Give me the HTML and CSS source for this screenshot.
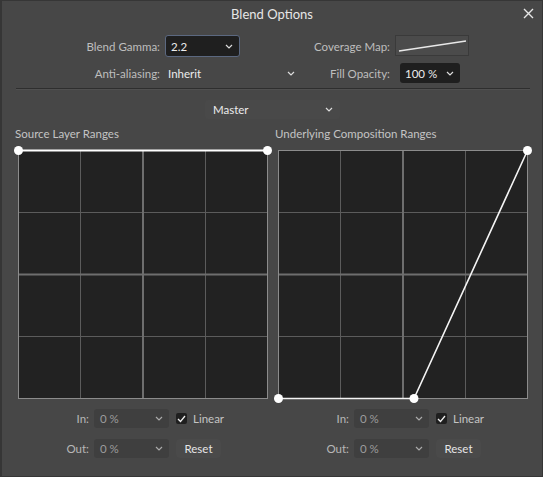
FILE: index.html
```html
<!DOCTYPE html>
<html lang="en">
<head>
    <meta charset="UTF-8">
    <title>Blend Options</title>
    <link rel="stylesheet" href="styles.css">
</head>
<body>
    <div class="window">
        <!-- Barra de título -->
        <div class="titlebar">
            <span class="title">Blend Options</span>
            <span class="close">
                <svg width="11" height="11" viewBox="0 0 11 11"><path d="M1 1 L10 10 M10 1 L1 10" stroke="#e6e6e6" stroke-width="1.4" fill="none"/></svg>
            </span>
        </div>

        <!-- Opções gerais -->
        <div class="options">
            <label class="opt-label">Blend Gamma:</label>
            <div class="select select-dark select-focus">
                <span>2.2</span>
                <svg class="chev" width="8" height="5" viewBox="0 0 8 5"><path d="M1 1 L4 4 L7 1" stroke="#ddd" stroke-width="1.2" fill="none"/></svg>
            </div>
            <label class="opt-label">Coverage Map:</label>
            <div class="coverage">
                <svg width="74" height="21" viewBox="0 0 74 21"><path d="M4 16 L71 6" stroke="#e8e8e8" stroke-width="1.3" fill="none"/></svg>
            </div>

            <label class="opt-label">Anti-aliasing:</label>
            <div class="select select-flat">
                <span>Inherit</span>
                <svg class="chev" width="8" height="5" viewBox="0 0 8 5"><path d="M1 1 L4 4 L7 1" stroke="#ddd" stroke-width="1.2" fill="none"/></svg>
            </div>
            <label class="opt-label">Fill Opacity:</label>
            <div class="select select-dark opacity">
                <span>100 %</span>
                <svg class="chev" width="8" height="5" viewBox="0 0 8 5"><path d="M1 1 L4 4 L7 1" stroke="#ddd" stroke-width="1.2" fill="none"/></svg>
            </div>
        </div>

        <div class="separator"></div>

        <div class="channel-row">
            <div class="select select-flat channel">
                <span>Master</span>
                <svg class="chev" width="8" height="5" viewBox="0 0 8 5"><path d="M1 1 L4 4 L7 1" stroke="#ddd" stroke-width="1.2" fill="none"/></svg>
            </div>
        </div>

        <!-- Faixas -->
        <div class="ranges">
            <div class="panel">
                <div class="panel-title">Source Layer Ranges</div>
                <svg class="graph" width="250" height="249" viewBox="0 0 250 249">
                    <rect x="0.5" y="0.5" width="249" height="248" fill="#222222" stroke="#8c8c8c" stroke-width="1"/>
                    <path d="M62.5 1 V248 M187.5 1 V248 M1 62.5 H249 M1 186.5 H249" stroke="#5c5c5c" stroke-width="1"/>
                    <path d="M125 1 V248 M1 124.5 H249" stroke="#6e6e6e" stroke-width="2"/>
                    <path d="M0.5 0.5 H249.5" stroke="#ffffff" stroke-width="2"/>
                    <circle cx="0.5" cy="0.5" r="4.5" fill="#ffffff"/>
                    <circle cx="249.5" cy="0.5" r="4.5" fill="#ffffff"/>
                </svg>
                <div class="controls">
                    <label class="ctl-label">In:</label>
                    <div class="select select-mid">
                        <span>0 %</span>
                        <svg class="chev" width="8" height="5" viewBox="0 0 8 5"><path d="M1 1 L4 4 L7 1" stroke="#aaa" stroke-width="1.2" fill="none"/></svg>
                    </div>
                    <div class="check-wrap">
                        <span class="checkbox">
                            <svg width="9" height="8" viewBox="0 0 9 8"><path d="M1 4 L3.5 6.5 L8 1" stroke="#eee" stroke-width="1.3" fill="none"/></svg>
                        </span>
                        <span>Linear</span>
                    </div>

                    <label class="ctl-label">Out:</label>
                    <div class="select select-mid">
                        <span>0 %</span>
                        <svg class="chev" width="8" height="5" viewBox="0 0 8 5"><path d="M1 1 L4 4 L7 1" stroke="#aaa" stroke-width="1.2" fill="none"/></svg>
                    </div>
                    <button class="btn-reset">Reset</button>
                </div>
            </div>

            <div class="panel">
                <div class="panel-title">Underlying Composition Ranges</div>
                <svg class="graph" width="250" height="249" viewBox="0 0 250 249">
                    <rect x="0.5" y="0.5" width="249" height="248" fill="#222222" stroke="#8c8c8c" stroke-width="1"/>
                    <path d="M62.5 1 V248 M187.5 1 V248 M1 62.5 H249 M1 186.5 H249" stroke="#5c5c5c" stroke-width="1"/>
                    <path d="M125 1 V248 M1 124.5 H249" stroke="#6e6e6e" stroke-width="2"/>
                    <path d="M0.5 248.5 H136 L249.5 0.5" stroke="#f4f4f4" stroke-width="1.6" fill="none"/>
                    <circle cx="0.5" cy="248.5" r="4.5" fill="#ffffff"/>
                    <circle cx="136" cy="248.5" r="4.5" fill="#ffffff"/>
                    <circle cx="249.5" cy="0.5" r="4.5" fill="#ffffff"/>
                </svg>
                <div class="controls">
                    <label class="ctl-label">In:</label>
                    <div class="select select-mid">
                        <span>0 %</span>
                        <svg class="chev" width="8" height="5" viewBox="0 0 8 5"><path d="M1 1 L4 4 L7 1" stroke="#aaa" stroke-width="1.2" fill="none"/></svg>
                    </div>
                    <div class="check-wrap">
                        <span class="checkbox">
                            <svg width="9" height="8" viewBox="0 0 9 8"><path d="M1 4 L3.5 6.5 L8 1" stroke="#eee" stroke-width="1.3" fill="none"/></svg>
                        </span>
                        <span>Linear</span>
                    </div>

                    <label class="ctl-label">Out:</label>
                    <div class="select select-mid">
                        <span>0 %</span>
                        <svg class="chev" width="8" height="5" viewBox="0 0 8 5"><path d="M1 1 L4 4 L7 1" stroke="#aaa" stroke-width="1.2" fill="none"/></svg>
                    </div>
                    <button class="btn-reset">Reset</button>
                </div>
            </div>
        </div>
    </div>
</body>
</html>
```

FILE: styles.css
```css
html, body {
    margin: 0;
    padding: 0;
    background: #363636;
}
body {
    font-family: Lato, "Noto Sans", sans-serif;
    font-size: 11.5px;
    color: #bebebe;
}
.window {
    width: 543px;
    height: 477px;
    box-sizing: border-box;
    background: #474747;
    border: 1px solid #363636;
    border-left-width: 2px;
}
.titlebar {
    position: relative;
    height: 26px;
    display: flex;
    align-items: center;
    justify-content: center;
}
.title {
    color: #e6e6e6;
    font-size: 13px;
}
.close {
    position: absolute;
    right: 8px;
    top: 7px;
    line-height: 0;
}
.options {
    display: grid;
    grid-template-columns: 158px 136px 84px 75px;
    grid-template-rows: 22px 20px;
    column-gap: 5px;
    row-gap: 6px;
    margin-top: 8px;
}
.opt-label {
    display: flex;
    align-items: center;
    justify-content: flex-end;
}
.select {
    display: flex;
    align-items: center;
    justify-content: space-between;
    box-sizing: border-box;
    padding: 0 6px 0 5px;
    color: #ececec;
    border-radius: 3px;
}
.select-dark {
    background: #1f1f1f;
}
.select-focus {
    width: 75px;
    border: 1px solid #5b6880;
}
.select-flat {
    padding-left: 3px;
}
.opacity {
    width: 60px;
    margin-left: 5px;
}
.coverage {
    width: 74px;
    height: 21px;
    box-sizing: border-box;
    border: 1px solid #3a3a3a;
    background: #4b4b4b;
    line-height: 0;
}
.coverage svg {
    margin: -1px;
}
.separator {
    margin: 5px 12px 0 14px;
    height: 1px;
    background: #2e2e2e;
    border-bottom: 1px solid #505050;
}
.channel-row {
    display: flex;
    justify-content: center;
    margin-top: 10px;
}
.channel {
    width: 135px;
    height: 19px;
    margin-left: 1px;
    padding-left: 8px;
    padding-right: 7px;
    background: #494949;
}
.ranges {
    display: flex;
    gap: 10px;
    padding-left: 16px;
    margin-top: 7px;
}
.panel {
    width: 250px;
}
.panel-title {
    margin-left: -3px;
    height: 16px;
    line-height: 16px;
    color: #c4c4c4;
}
.graph {
    display: block;
    margin-top: 8px;
    overflow: visible;
}
.controls {
    display: grid;
    grid-template-columns: 71px 75px auto;
    grid-template-rows: 19px 19px;
    column-gap: 5px;
    row-gap: 11px;
    margin-top: 10px;
}
.ctl-label {
    display: flex;
    align-items: center;
    justify-content: flex-end;
    color: #b8b8b8;
}
.select-mid {
    background: #3f3f3f;
    color: #9c9c9c;
    padding-left: 6px;
}
.check-wrap {
    display: flex;
    align-items: center;
    gap: 6px;
    margin-left: 2px;
    color: #c4c4c4;
}
.checkbox {
    width: 11px;
    height: 11px;
    background: #1f1f1f;
    border-radius: 2px;
    display: flex;
    align-items: center;
    justify-content: center;
}
.btn-reset {
    justify-self: start;
    width: 45px;
    height: 19px;
    margin-left: 2px;
    padding: 0;
    border: none;
    border-radius: 4px;
    background: #4a4a4a;
    color: #e6e6e6;
    font-family: inherit;
    font-size: 11.5px;
}
```
